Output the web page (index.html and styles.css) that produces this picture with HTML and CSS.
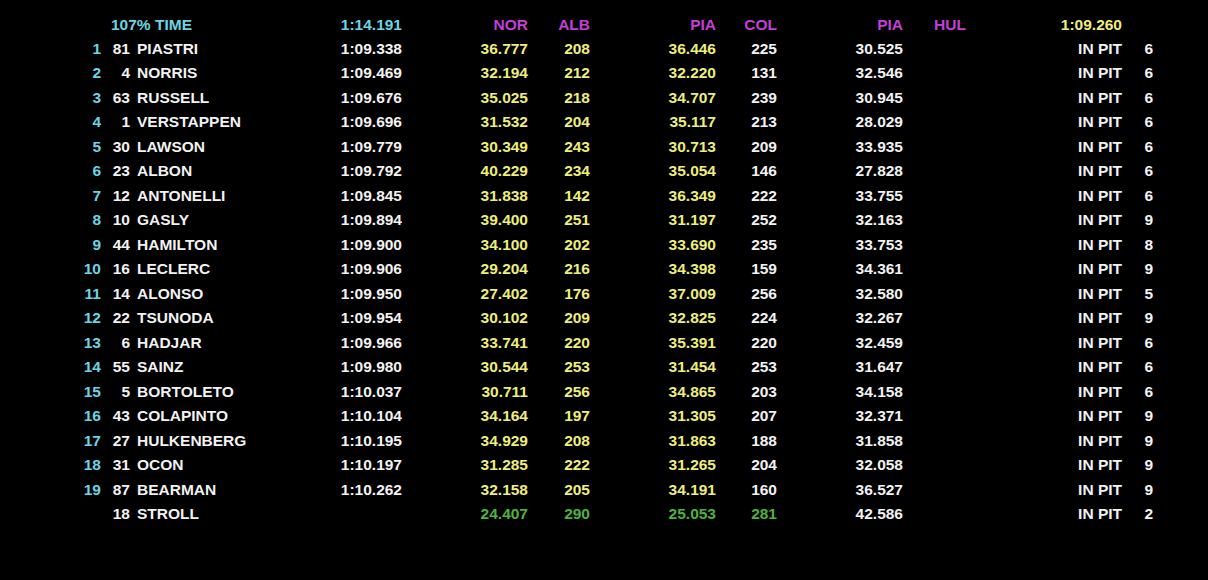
FILE: index.html
```html
<!DOCTYPE html>
<html>
<head>
<meta charset="utf-8">
<link rel="stylesheet" href="styles.css">
</head>
<body>
<div class="board">
  <div class="row head">
    <span class="label">107% TIME</span>
    <span class="time cyan">1:14.191</span>
    <span class="s1 mag">NOR</span>
    <span class="sp1 mag">ALB</span>
    <span class="s2 mag">PIA</span>
    <span class="sp2 mag">COL</span>
    <span class="s3 mag">PIA</span>
    <span class="hul mag">HUL</span>
    <span class="status yel">1:09.260</span>
  </div>
  <div class="row"><span class="pos">1</span><span class="car">81</span><span class="name">PIASTRI</span><span class="time">1:09.338</span><span class="s1 yel">36.777</span><span class="sp1 yel">208</span><span class="s2 yel">36.446</span><span class="sp2">225</span><span class="s3">30.525</span><span class="status">IN PIT</span><span class="laps">6</span></div>
  <div class="row"><span class="pos">2</span><span class="car">4</span><span class="name">NORRIS</span><span class="time">1:09.469</span><span class="s1 yel">32.194</span><span class="sp1 yel">212</span><span class="s2 yel">32.220</span><span class="sp2">131</span><span class="s3">32.546</span><span class="status">IN PIT</span><span class="laps">6</span></div>
  <div class="row"><span class="pos">3</span><span class="car">63</span><span class="name">RUSSELL</span><span class="time">1:09.676</span><span class="s1 yel">35.025</span><span class="sp1 yel">218</span><span class="s2 yel">34.707</span><span class="sp2">239</span><span class="s3">30.945</span><span class="status">IN PIT</span><span class="laps">6</span></div>
  <div class="row"><span class="pos">4</span><span class="car">1</span><span class="name">VERSTAPPEN</span><span class="time">1:09.696</span><span class="s1 yel">31.532</span><span class="sp1 yel">204</span><span class="s2 yel">35.117</span><span class="sp2">213</span><span class="s3">28.029</span><span class="status">IN PIT</span><span class="laps">6</span></div>
  <div class="row"><span class="pos">5</span><span class="car">30</span><span class="name">LAWSON</span><span class="time">1:09.779</span><span class="s1 yel">30.349</span><span class="sp1 yel">243</span><span class="s2 yel">30.713</span><span class="sp2">209</span><span class="s3">33.935</span><span class="status">IN PIT</span><span class="laps">6</span></div>
  <div class="row"><span class="pos">6</span><span class="car">23</span><span class="name">ALBON</span><span class="time">1:09.792</span><span class="s1 yel">40.229</span><span class="sp1 yel">234</span><span class="s2 yel">35.054</span><span class="sp2">146</span><span class="s3">27.828</span><span class="status">IN PIT</span><span class="laps">6</span></div>
  <div class="row"><span class="pos">7</span><span class="car">12</span><span class="name">ANTONELLI</span><span class="time">1:09.845</span><span class="s1 yel">31.838</span><span class="sp1 yel">142</span><span class="s2 yel">36.349</span><span class="sp2">222</span><span class="s3">33.755</span><span class="status">IN PIT</span><span class="laps">6</span></div>
  <div class="row"><span class="pos">8</span><span class="car">10</span><span class="name">GASLY</span><span class="time">1:09.894</span><span class="s1 yel">39.400</span><span class="sp1 yel">251</span><span class="s2 yel">31.197</span><span class="sp2">252</span><span class="s3">32.163</span><span class="status">IN PIT</span><span class="laps">9</span></div>
  <div class="row"><span class="pos">9</span><span class="car">44</span><span class="name">HAMILTON</span><span class="time">1:09.900</span><span class="s1 yel">34.100</span><span class="sp1 yel">202</span><span class="s2 yel">33.690</span><span class="sp2">235</span><span class="s3">33.753</span><span class="status">IN PIT</span><span class="laps">8</span></div>
  <div class="row"><span class="pos">10</span><span class="car">16</span><span class="name">LECLERC</span><span class="time">1:09.906</span><span class="s1 yel">29.204</span><span class="sp1 yel">216</span><span class="s2 yel">34.398</span><span class="sp2">159</span><span class="s3">34.361</span><span class="status">IN PIT</span><span class="laps">9</span></div>
  <div class="row"><span class="pos">11</span><span class="car">14</span><span class="name">ALONSO</span><span class="time">1:09.950</span><span class="s1 yel">27.402</span><span class="sp1 yel">176</span><span class="s2 yel">37.009</span><span class="sp2">256</span><span class="s3">32.580</span><span class="status">IN PIT</span><span class="laps">5</span></div>
  <div class="row"><span class="pos">12</span><span class="car">22</span><span class="name">TSUNODA</span><span class="time">1:09.954</span><span class="s1 yel">30.102</span><span class="sp1 yel">209</span><span class="s2 yel">32.825</span><span class="sp2">224</span><span class="s3">32.267</span><span class="status">IN PIT</span><span class="laps">9</span></div>
  <div class="row"><span class="pos">13</span><span class="car">6</span><span class="name">HADJAR</span><span class="time">1:09.966</span><span class="s1 yel">33.741</span><span class="sp1 yel">220</span><span class="s2 yel">35.391</span><span class="sp2">220</span><span class="s3">32.459</span><span class="status">IN PIT</span><span class="laps">6</span></div>
  <div class="row"><span class="pos">14</span><span class="car">55</span><span class="name">SAINZ</span><span class="time">1:09.980</span><span class="s1 yel">30.544</span><span class="sp1 yel">253</span><span class="s2 yel">31.454</span><span class="sp2">253</span><span class="s3">31.647</span><span class="status">IN PIT</span><span class="laps">6</span></div>
  <div class="row"><span class="pos">15</span><span class="car">5</span><span class="name">BORTOLETO</span><span class="time">1:10.037</span><span class="s1 yel">30.711</span><span class="sp1 yel">256</span><span class="s2 yel">34.865</span><span class="sp2">203</span><span class="s3">34.158</span><span class="status">IN PIT</span><span class="laps">6</span></div>
  <div class="row"><span class="pos">16</span><span class="car">43</span><span class="name">COLAPINTO</span><span class="time">1:10.104</span><span class="s1 yel">34.164</span><span class="sp1 yel">197</span><span class="s2 yel">31.305</span><span class="sp2">207</span><span class="s3">32.371</span><span class="status">IN PIT</span><span class="laps">9</span></div>
  <div class="row"><span class="pos">17</span><span class="car">27</span><span class="name">HULKENBERG</span><span class="time">1:10.195</span><span class="s1 yel">34.929</span><span class="sp1 yel">208</span><span class="s2 yel">31.863</span><span class="sp2">188</span><span class="s3">31.858</span><span class="status">IN PIT</span><span class="laps">9</span></div>
  <div class="row"><span class="pos">18</span><span class="car">31</span><span class="name">OCON</span><span class="time">1:10.197</span><span class="s1 yel">31.285</span><span class="sp1 yel">222</span><span class="s2 yel">31.265</span><span class="sp2">204</span><span class="s3">32.058</span><span class="status">IN PIT</span><span class="laps">9</span></div>
  <div class="row"><span class="pos">19</span><span class="car">87</span><span class="name">BEARMAN</span><span class="time">1:10.262</span><span class="s1 yel">32.158</span><span class="sp1 yel">205</span><span class="s2 yel">34.191</span><span class="sp2">160</span><span class="s3">36.527</span><span class="status">IN PIT</span><span class="laps">9</span></div>
  <div class="row"><span class="pos"></span><span class="car">18</span><span class="name">STROLL</span><span class="time"></span><span class="s1 grn">24.407</span><span class="sp1 grn">290</span><span class="s2 grn">25.053</span><span class="sp2 grn">281</span><span class="s3">42.586</span><span class="status">IN PIT</span><span class="laps">2</span></div>
</div>
</body>
</html>
```

FILE: styles.css
```css
html, body {
  margin: 0;
  padding: 0;
  background: #000;
}
body {
  width: 1208px;
  height: 580px;
  overflow: hidden;
  font-family: "Liberation Sans", Arial, sans-serif;
  font-weight: bold;
  font-size: 15.5px;
  color: #f2f2f2;
}
.board {
  padding-top: 13px;
}
.row {
  display: grid;
  grid-template-columns: 101px 29px 170px 102px 126px 62px 126px 61px 126px 97px 122px 31px;
  height: 24.5px;
  line-height: 24.5px;
  white-space: nowrap;
}
.row.head {
  height: 23.5px;
}
.row > span { display: block; }
.pos { grid-column: 1; text-align: right; color: #6cd4e4; }
.car { grid-column: 2; text-align: right; }
.name { grid-column: 3; padding-left: 7px; }
.label { grid-column: 2 / 4; padding-left: 10px; color: #6cd4e4; }
.time { grid-column: 4; text-align: right; }
.s1 { grid-column: 5; text-align: right; }
.sp1 { grid-column: 6; text-align: right; }
.s2 { grid-column: 7; text-align: right; }
.sp2 { grid-column: 8; text-align: right; }
.s3 { grid-column: 9; text-align: right; }
.hul { grid-column: 10; padding-left: 31px; }
.status { grid-column: 11; text-align: right; }
.laps { grid-column: 12; text-align: right; }
.cyan { color: #6cd4e4; }
.mag { color: #c43ed8; }
.yel { color: #eeee7a; }
.grn { color: #4eb23e; }
```
